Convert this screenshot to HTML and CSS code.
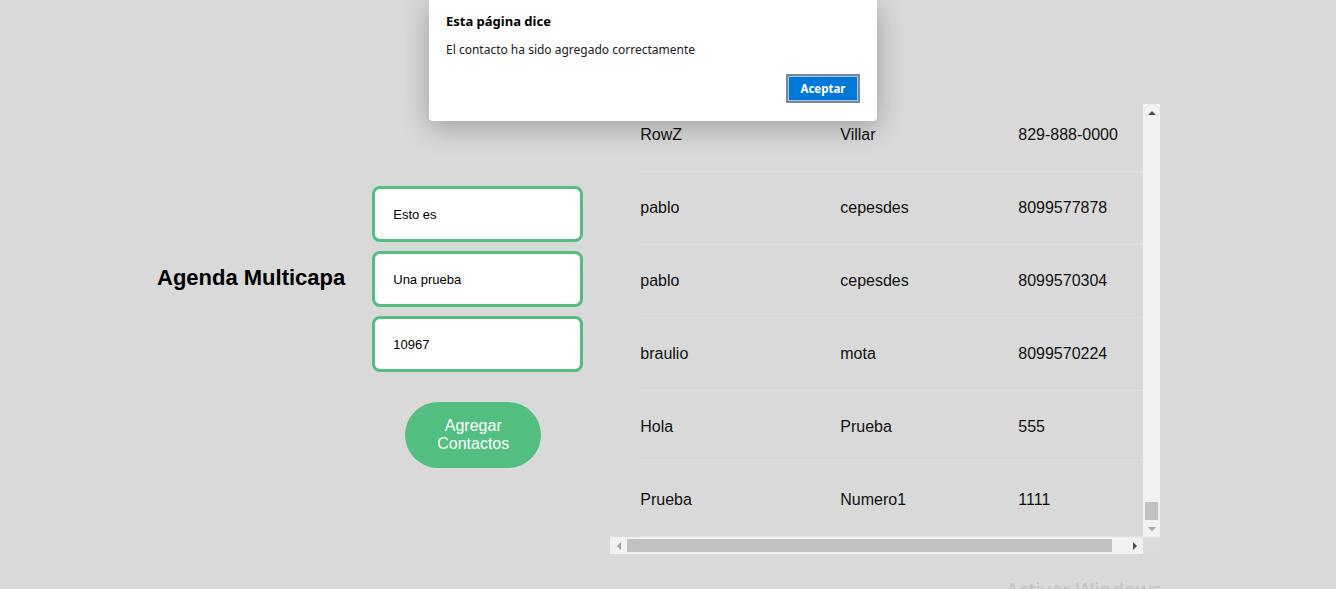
FILE: index.html
```html
<!DOCTYPE html>
<html lang="es">
<head>
<meta charset="utf-8">
<title>Agenda Multicapa</title>
<link rel="stylesheet" href="styles.css">
</head>
<body>
<main class="page">
  <h1 class="title">Agenda Multicapa</h1>
  <form class="form">
    <input class="field" type="text" value="Esto es">
    <input class="field" type="text" value="Una prueba">
    <input class="field" type="text" value="10967">
    <button class="add-btn" type="button">Agregar<br>Contactos</button>
  </form>
  <section class="table-box">
    <div class="viewport">
      <div class="rows">
        <div class="row"><span>RowZ</span><span>Villar</span><span>829-888-0000</span></div>
        <div class="row"><span>pablo</span><span>cepesdes</span><span>8099577878</span></div>
        <div class="row"><span>pablo</span><span>cepesdes</span><span>8099570304</span></div>
        <div class="row"><span>braulio</span><span>mota</span><span>8099570224</span></div>
        <div class="row"><span>Hola</span><span>Prueba</span><span>555</span></div>
        <div class="row"><span>Prueba</span><span>Numero1</span><span>1111</span></div>
      </div>
    </div>
    <div class="vbar">
      <span class="arrow up"></span>
      <span class="vtrack"><span class="vthumb"></span></span>
      <span class="arrow down"></span>
    </div>
    <div class="hbar">
      <span class="arrow left"></span>
      <span class="htrack"><span class="hthumb"></span></span>
      <span class="arrow right"></span>
    </div>
    <div class="corner"></div>
  </section>
</main>

<div class="dialog" role="alertdialog">
  <div class="dialog-title">Esta página dice</div>
  <div class="dialog-msg">El contacto ha sido agregado correctamente</div>
  <div class="dialog-actions">
    <button class="dialog-btn" type="button">Aceptar</button>
  </div>
</div>

<div class="watermark">Activar Windows</div>
</body>
</html>
```

FILE: styles.css
```css
html, body {
  margin: 0;
  padding: 0;
  background: #d9d9d9;
  height: 100%;
  overflow: hidden;
}

body {
  font-family: "Liberation Sans", Arial, sans-serif;
  color: #000;
}

.page {
  display: flex;
  align-items: flex-start;
  padding: 104px 0 0 157px;
}

.title {
  margin: 161px 27px 0 0;
  font-size: 22px;
  font-weight: bold;
  line-height: 26px;
  white-space: nowrap;
}

.form {
  display: flex;
  flex-direction: column;
  align-items: flex-start;
  margin: 82px 27px 0 0;
  width: 211px;
}

.field {
  box-sizing: border-box;
  width: 211px;
  height: 56px;
  margin: 0 0 9px 0;
  padding: 0 0 0 18px;
  border: 3px solid #52be80;
  border-radius: 8px;
  background: #fff;
  font-family: "Liberation Sans", Arial, sans-serif;
  font-size: 13px;
  color: #000;
  outline: none;
}

.add-btn {
  margin: 21px 0 0 33px;
  width: 136px;
  height: 66px;
  border: none;
  border-radius: 33px;
  background: #52be80;
  color: #fff;
  font-family: "Liberation Sans", Arial, sans-serif;
  font-size: 16px;
  line-height: 18px;
  padding: 0;
}

.table-box {
  display: grid;
  grid-template-columns: 533px 17px;
  grid-template-rows: 433px 17px;
}

.viewport {
  overflow: hidden;
}

.rows {
  margin-top: -5px;
  width: 548px;
}

.row {
  display: grid;
  grid-template-columns: 200px 178px 1fr;
  align-items: center;
  margin-left: 30px;
  height: 72px;
  border-bottom: 1px solid #e0e0e0;
  font-size: 16px;
  color: #111;
}

.vbar {
  background: #f1f1f1;
  display: flex;
  flex-direction: column;
  align-items: center;
}

.vtrack {
  flex: 1;
  width: 100%;
  display: flex;
  flex-direction: column;
  justify-content: flex-end;
  align-items: center;
}

.vthumb {
  width: 13px;
  height: 18px;
  background: #c1c1c1;
}

.hbar {
  background: #f1f1f1;
  display: flex;
  align-items: center;
}

.htrack {
  flex: 1;
  height: 100%;
  display: flex;
  align-items: center;
}

.hthumb {
  width: 485px;
  height: 13px;
  background: #c1c1c1;
}

.corner {
  background: #dcdcdc;
}

.arrow {
  width: 17px;
  height: 17px;
  flex: none;
  display: flex;
  align-items: center;
  justify-content: center;
}

.arrow::before {
  content: "";
  width: 0;
  height: 0;
}

.arrow.up::before {
  border-left: 4px solid transparent;
  border-right: 4px solid transparent;
  border-bottom: 4px solid #505050;
}

.arrow.down::before {
  border-left: 4px solid transparent;
  border-right: 4px solid transparent;
  border-top: 4px solid #a3a3a3;
}

.arrow.left::before {
  border-top: 4px solid transparent;
  border-bottom: 4px solid transparent;
  border-right: 4px solid #a3a3a3;
}

.arrow.right::before {
  border-top: 4px solid transparent;
  border-bottom: 4px solid transparent;
  border-left: 4px solid #505050;
}

.dialog {
  position: absolute;
  left: 429px;
  top: 0;
  width: 448px;
  height: 121px;
  box-sizing: border-box;
  padding: 12px 17px 0 17px;
  background: #fff;
  border-radius: 0 0 4px 4px;
  box-shadow: 0 6px 28px rgba(0, 0, 0, 0.28);
  font-family: "Noto Sans", "Open Sans", sans-serif;
  color: #000;
}

.dialog-title {
  font-size: 13px;
  font-weight: bold;
  line-height: 18px;
}

.dialog-msg {
  margin-top: 12px;
  font-size: 12px;
  line-height: 16px;
  color: #202020;
}

.dialog-actions {
  display: flex;
  justify-content: flex-end;
  margin-top: 16px;
}

.dialog-btn {
  box-sizing: border-box;
  width: 74px;
  height: 29px;
  border: 2px solid #7b8594;
  box-shadow: inset 0 0 0 1px #9cc8f0;
  background: #0078d7;
  color: #fff;
  font-family: "Noto Sans", "Open Sans", sans-serif;
  font-size: 11.5px;
  font-weight: bold;
  padding: 0;
}

.watermark {
  position: absolute;
  left: 1006px;
  top: 576px;
  font-family: "Noto Sans", "Open Sans", sans-serif;
  font-size: 20px;
  color: #c2c2c2;
  white-space: nowrap;
}
```
